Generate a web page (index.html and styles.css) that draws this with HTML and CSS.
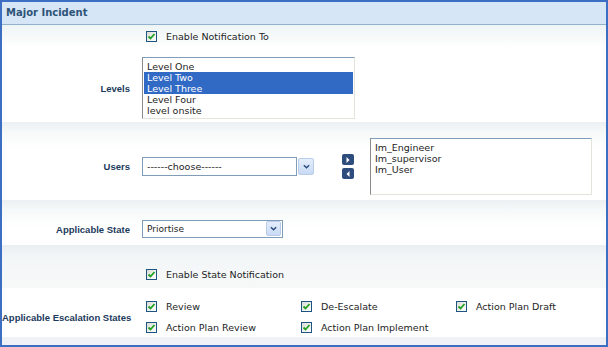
FILE: index.html
```html
<!DOCTYPE html>
<html lang="en">
<head>
    <meta charset="UTF-8">
    <title>Major Incident</title>
    <link rel="stylesheet" href="styles.css">
</head>
<body>
    <div class="panel">
        <div class="panel-head">Major Incident</div>

        <!-- 通知設定 -->
        <div class="row row-notify">
            <div class="label"></div>
            <div class="field">
                <label class="check"><span class="box"><svg viewBox="0 0 9 9"><path d="M1.5 4.5 L3.5 6.5 L7.5 2" /></svg></span>Enable Notification To</label>
            </div>
        </div>

        <div class="row row-levels">
            <div class="label">Levels</div>
            <div class="field">
                <ul class="listbox levels">
                    <li>Level One</li>
                    <li class="selected">Level Two</li>
                    <li class="selected">Level Three</li>
                    <li>Level Four</li>
                    <li>level onsite</li>
                </ul>
            </div>
        </div>

        <div class="row row-users">
            <div class="label">Users</div>
            <div class="field users">
                <div class="select select-users">
                    <span class="select-text">------choose------</span>
                </div>
                <span class="drop-btn outside"><svg viewBox="0 0 8 5"><path d="M1 1 L4 4 L7 1" /></svg></span>
                <div class="movers">
                    <span class="mover"><svg viewBox="0 0 6 8"><path d="M1.5 1 L4.5 4 L1.5 7 Z" /></svg></span>
                    <span class="mover"><svg viewBox="0 0 6 8"><path d="M4.5 1 L1.5 4 L4.5 7 Z" /></svg></span>
                </div>
                <ul class="listbox chosen">
                    <li>Im_Engineer</li>
                    <li>Im_supervisor</li>
                    <li>Im_User</li>
                </ul>
            </div>
        </div>

        <div class="row row-state">
            <div class="label">Applicable State</div>
            <div class="field">
                <div class="select select-state">
                    <span class="select-text">Priortise</span>
                    <span class="drop-btn"><svg viewBox="0 0 8 5"><path d="M1 1 L4 4 L7 1" /></svg></span>
                </div>
            </div>
        </div>

        <div class="row row-state-notify">
            <div class="label"></div>
            <div class="field">
                <label class="check"><span class="box"><svg viewBox="0 0 9 9"><path d="M1.5 4.5 L3.5 6.5 L7.5 2" /></svg></span>Enable State Notification</label>
            </div>
        </div>

        <div class="row row-escalation">
            <div class="label">Applicable Escalation States</div>
            <div class="field">
                <div class="check-grid">
                    <label class="check"><span class="box"><svg viewBox="0 0 9 9"><path d="M1.5 4.5 L3.5 6.5 L7.5 2" /></svg></span>Review</label>
                    <label class="check"><span class="box"><svg viewBox="0 0 9 9"><path d="M1.5 4.5 L3.5 6.5 L7.5 2" /></svg></span>De-Escalate</label>
                    <label class="check"><span class="box"><svg viewBox="0 0 9 9"><path d="M1.5 4.5 L3.5 6.5 L7.5 2" /></svg></span>Action Plan Draft</label>
                    <label class="check"><span class="box"><svg viewBox="0 0 9 9"><path d="M1.5 4.5 L3.5 6.5 L7.5 2" /></svg></span>Action Plan Review</label>
                    <label class="check"><span class="box"><svg viewBox="0 0 9 9"><path d="M1.5 4.5 L3.5 6.5 L7.5 2" /></svg></span>Action Plan Implement</label>
                </div>
            </div>
        </div>

        <div class="panel-foot"></div>
    </div>
</body>
</html>
```

FILE: styles.css
```css
/* 全体 */
body {
    margin: 0;
    padding: 0;
    background: #fff;
    font-family: 'DejaVu Sans', sans-serif;
    font-size: 9.5px;
    color: #1e1e1e;
}

.panel {
    width: 608px;
    height: 347px;
    box-sizing: border-box;
    border: 2px solid #3c6fc2;
    background: #fff;
    overflow: hidden;
}

.panel-head {
    height: 22px;
    line-height: 22px;
    padding-left: 4px;
    background: #d6e6f6;
    border-bottom: 1px solid #93b1cf;
    font-weight: bold;
    font-size: 10px;
    color: #2d5478;
}

/* 行 */
.row {
    display: grid;
    grid-template-columns: 128px 1fr;
    column-gap: 12px;
    align-items: center;
    box-sizing: border-box;
    background: linear-gradient(#ebf0f3, #f6f9f9 10px, #ffffff 28px);
}

.label {
    text-align: right;
    white-space: nowrap;
    font-family: 'Liberation Sans', Arial, sans-serif;
    font-weight: bold;
    font-size: 9.5px;
    color: #1c3b5c;
}

.row-notify { height: 25px; padding: 6px 0 8px; background: linear-gradient(#eef4f4, #ffffff 22px); }
.row-levels { height: 72px; padding: 7px 0 4px; background: #fff; }
.row-users { height: 78px; padding: 16px 0 6px; }
.row-state { height: 45px; padding: 20px 0 8px; }
.row-state-notify { height: 43px; padding: 24px 0 8px; background: linear-gradient(#e9eef2, #f3f6f7 12px, #f7f9f9 100%); }
.row-escalation { height: 49px; padding: 13px 0 4px; background: #fff; }

.panel-foot {
    height: 8px;
    background: #eef2f6;
}

/* チェックボックス */
.check {
    display: flex;
    align-items: center;
    height: 11px;
    white-space: nowrap;
}

.box {
    width: 11px;
    height: 11px;
    box-sizing: border-box;
    margin-left: 4px;
    margin-right: 9px;
    border: 1px solid #1e5482;
    background: linear-gradient(135deg, #dcdcd6, #ffffff);
    display: flex;
    align-items: center;
    justify-content: center;
}

.box svg {
    width: 9px;
    height: 9px;
}

.box path {
    fill: none;
    stroke: #21a121;
    stroke-width: 1.8;
}

.check-grid {
    display: grid;
    grid-template-columns: repeat(3, 155px);
    row-gap: 10px;
}

/* リストボックス */
.listbox {
    list-style: none;
    margin: 0;
    padding: 3px 1px 1px;
    box-sizing: border-box;
    border: 1px solid;
    border-color: #7f9db9 #e4e4da #e4e4da #8a8a8a;
    background: #fff;
    line-height: 11px;
}

.listbox li {
    padding-left: 3px;
    height: 11px;
}

.listbox li.selected {
    background: #316ac5;
    color: #fff;
}

.levels {
    width: 213px;
    height: 62px;
}

.chosen {
    width: 222px;
    height: 57px;
    padding-top: 3px;
    margin-left: 16px;
}

/* セレクト */
.users {
    display: flex;
    align-items: center;
}

.select {
    position: relative;
    box-sizing: border-box;
    border: 1px solid #7f9db9;
    background: #fff;
    display: flex;
    align-items: center;
}

.select-text {
    padding-left: 4px;
}

.select-users {
    width: 155px;
    height: 19px;
}

.select-state {
    width: 141px;
    height: 18px;
    font-size: 9px;
}

.drop-btn {
    width: 15px;
    height: 15px;
    box-sizing: border-box;
    border: 1px solid #bacce8;
    border-radius: 2px;
    background: linear-gradient(#e4edfb, #c9daf5);
    display: flex;
    align-items: center;
    justify-content: center;
}

.select-state .drop-btn {
    position: absolute;
    right: 1px;
    top: 0;
}

.drop-btn.outside {
    width: 16px;
    height: 17px;
    margin-left: 1px;
}

.drop-btn svg {
    width: 7px;
    height: 5px;
}

.drop-btn path {
    fill: none;
    stroke: #2b4b7d;
    stroke-width: 1.6;
}

/* 移動ボタン */
.movers {
    display: flex;
    flex-direction: column;
    gap: 3px;
    margin-left: 28px;
}

.mover {
    width: 12px;
    height: 11px;
    border-radius: 2px;
    background: #2e4c7c;
    display: flex;
    align-items: center;
    justify-content: center;
}

.mover svg {
    width: 6px;
    height: 8px;
}

.mover path {
    fill: #fff;
}
```
